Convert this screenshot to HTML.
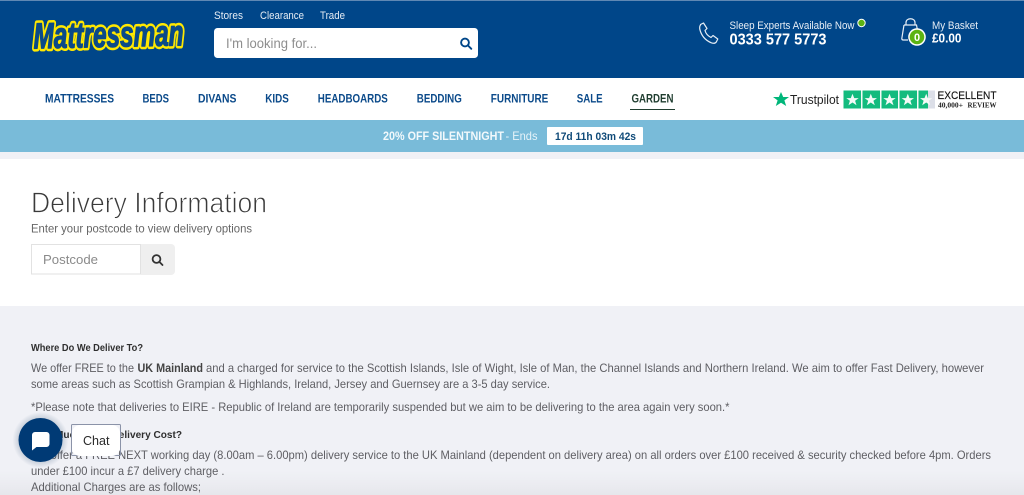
<!DOCTYPE html>
<html lang="en"><head><meta charset="utf-8"><title>Delivery Information</title>
<style>
html,body{margin:0;padding:0;width:1024px;height:495px;overflow:hidden;background:#f0f1f6}
svg{display:block;position:absolute;left:0;top:0;font-family:"Liberation Sans",Arial,sans-serif}
</style></head><body>
<svg width="1024" height="495" viewBox="0 0 1024 495" xmlns="http://www.w3.org/2000/svg">
<defs>
<linearGradient id="fade" x1="0" y1="0" x2="0" y2="1"><stop offset="0" stop-color="#e4e5ea" stop-opacity="0"/><stop offset="1" stop-color="#dfe0e5"/></linearGradient>
<radialGradient id="sh"><stop offset=".7" stop-color="#002a55" stop-opacity=".22"/><stop offset="1" stop-color="#002a55" stop-opacity="0"/></radialGradient>
<polygon id="s" points="0,-6.2 1.7,-1.9 6.2,-1.9 2.6,0.8 4,5.2 0,2.500 -4,5.2 -2.6,0.8 -6.2,-1.9 -1.7,-1.9"/>
</defs>
<rect width="1024" height="495" fill="#f0f1f6"/>
<rect y="470" width="1024" height="25" fill="url(#fade)" opacity=".6"/>
<rect width="1024" height="78" fill="#004689"/><rect width="1024" height="1" fill="#5f88b4"/>
<rect y="78" width="1024" height="42" fill="#fff"/>
<rect y="120" width="1024" height="32" fill="#79bbd9"/>
<rect y="159" width="1024" height="147" fill="#fff"/>

<g transform="rotate(-1.2 108 33)" font-size="36" font-weight="700" font-style="italic" stroke-linejoin="round">
<text x="33.500" y="46.800" textLength="150" lengthAdjust="spacingAndGlyphs" fill="#ffe800" stroke="#ffe800" stroke-width="6.400">Mattressman</text>
<text x="33.500" y="46.800" textLength="150" lengthAdjust="spacingAndGlyphs" fill="#0a4a88" stroke="#0a4a88" stroke-width="1.400">Mattressman</text></g>

<g fill="#e6edf5" font-size="10.800">
<text x="214" y="19" textLength="29" lengthAdjust="spacingAndGlyphs">Stores</text>
<text x="260" y="19" textLength="44" lengthAdjust="spacingAndGlyphs">Clearance</text>
<text x="320" y="19" textLength="25" lengthAdjust="spacingAndGlyphs">Trade</text></g>
<rect x="214" y="28" width="264" height="30" rx="3.500" fill="#fff"/>
<text x="226" y="48" font-size="14" fill="#8e8e8e" textLength="91" lengthAdjust="spacingAndGlyphs">I'm looking for...</text>
<g fill="none" stroke="#004689" stroke-width="1.900"><circle cx="465" cy="42.500" r="3.900"/><path d="M468 45.500l3.300 3.300" stroke-linecap="round"/></g>

<path d="M700.500 24.500l3-1.500 3.500 5.500-2 2c.8 3 3 5.500 6 7l2-2 4.800 3.500-1.500 3c-1 1.500-3 1.500-5 .8-6-2.500-10-7.500-11.500-13.500-.3-2 0-3.500.7-4.300z" fill="none" stroke="#e6eef6" stroke-width="1.200" stroke-linejoin="round"/>
<text x="729.500" y="29" font-size="10.800" fill="#e6edf5" textLength="125" lengthAdjust="spacingAndGlyphs">Sleep Experts Available Now</text>
<circle cx="861.500" cy="23" r="4.200" fill="#fff"/><circle cx="861.500" cy="23" r="3.200" fill="#5cb312"/>
<text x="729.500" y="44.500" font-size="15.500" font-weight="700" fill="#fff" textLength="97" lengthAdjust="spacingAndGlyphs">0333 577 5773</text>
<path d="M904 25h12.500l1.500 8M904 25l-2.200 13.500c0 1 .5 1.500 1.500 1.500h4.700M906 25v-2.500c0-5 9-5 9 0v2.500" fill="none" stroke="#e6eef6" stroke-width="1.200"/>
<circle cx="917" cy="37" r="8.800" fill="#fff"/><circle cx="917" cy="37" r="7.300" fill="#5cb312"/>
<text x="917" y="41" font-size="11" font-weight="700" fill="#fff" text-anchor="middle">0</text>
<text x="932" y="29" font-size="10.800" fill="#e6edf5" textLength="46" lengthAdjust="spacingAndGlyphs">My Basket</text>
<text x="932" y="42.500" font-size="13" font-weight="700" fill="#fff" textLength="29.500" lengthAdjust="spacingAndGlyphs">£0.00</text>

<g font-size="11.600" font-weight="700" fill="#0b4a8a">
<text x="45" y="102.300" textLength="69" lengthAdjust="spacingAndGlyphs">MATTRESSES</text>
<text x="142.500" y="102.300" textLength="26.500" lengthAdjust="spacingAndGlyphs">BEDS</text>
<text x="198" y="102.300" textLength="38.500" lengthAdjust="spacingAndGlyphs">DIVANS</text>
<text x="265.300" y="102.300" textLength="23.500" lengthAdjust="spacingAndGlyphs">KIDS</text>
<text x="317.800" y="102.300" textLength="70" lengthAdjust="spacingAndGlyphs">HEADBOARDS</text>
<text x="416.800" y="102.300" textLength="45" lengthAdjust="spacingAndGlyphs">BEDDING</text>
<text x="490.800" y="102.300" textLength="57.500" lengthAdjust="spacingAndGlyphs">FURNITURE</text>
<text x="576.700" y="102.300" textLength="26" lengthAdjust="spacingAndGlyphs">SALE</text>
<text x="631.500" y="102.300" textLength="42" lengthAdjust="spacingAndGlyphs" fill="#1f3d2f">GARDEN</text></g>
<rect x="630" y="109" width="45" height="1" fill="#1f3d2f"/>

<polygon points="781,92 783.200,97 789,97 784.400,100.400 786.200,106 781,102.700 775.800,106 777.600,100.400 773,97 778.800,97" fill="#00b67a"/>
<text x="790" y="104" font-size="12.500" fill="#222" textLength="49" lengthAdjust="spacingAndGlyphs">Trustpilot</text>
<rect x="843.500" y="90.500" width="91.500" height="18" fill="#13bb7e"/>
<rect x="928" y="90.500" width="7" height="18" fill="#dcdfe8"/>
<g fill="#f4faf7"><rect x="861" y="90.500" width="1.500" height="18"/><rect x="880" y="90.500" width="1.500" height="18"/><rect x="898" y="90.500" width="1.500" height="18"/><rect x="917" y="90.500" width="1.500" height="18"/>
<use href="#s" x="852.500" y="100"/><use href="#s" x="870.800" y="100"/><use href="#s" x="889.500" y="100"/><use href="#s" x="907.800" y="100"/><use href="#s" x="926.200" y="100"/></g>
<text x="937.500" y="99" font-size="11" fill="#111" stroke="#111" stroke-width=".15" textLength="59" lengthAdjust="spacingAndGlyphs">EXCELLENT</text>
<g font-family="'Liberation Serif',serif" font-size="7" font-weight="700" fill="#222"><text x="938" y="107.500" textLength="25" lengthAdjust="spacingAndGlyphs">40,000+</text><text x="967.500" y="107.500" textLength="29" lengthAdjust="spacingAndGlyphs">REVIEW</text></g>

<text x="383" y="140" font-size="12" font-weight="700" fill="#f2f9fc" textLength="121" lengthAdjust="spacingAndGlyphs">20% OFF SILENTNIGHT</text>
<text x="505.500" y="140" font-size="12" fill="#e6f3f9" textLength="32" lengthAdjust="spacingAndGlyphs">- Ends</text>
<rect x="547" y="127" width="96" height="18" rx="1" fill="#fff"/>
<text x="555" y="140" font-size="11.200" font-weight="700" fill="#0f4a78" textLength="81" lengthAdjust="spacingAndGlyphs">17d 11h 03m 42s</text>

<text x="31" y="212.500" font-size="29" fill="#3a3a3a" stroke="#fff" stroke-width=".85" paint-order="fill" textLength="236" lengthAdjust="spacingAndGlyphs">Delivery Information</text>
<text x="31" y="232.500" font-size="12" fill="#666" textLength="221" lengthAdjust="spacingAndGlyphs">Enter your postcode to view delivery options</text>
<rect x="31.500" y="244.500" width="109" height="29.500" fill="#fff" stroke="#e2e2e2"/>
<path d="M141 244h30a4 4 0 0 1 4 4v23a4 4 0 0 1-4 4h-30z" fill="#efefef"/>
<text x="43" y="264" font-size="13" fill="#8a8a8a" textLength="55" lengthAdjust="spacingAndGlyphs">Postcode</text>
<g fill="none" stroke="#333" stroke-width="1.800"><circle cx="156.500" cy="259" r="3.900"/><path d="M159.500 262l3 3" stroke-linecap="round"/></g>

<g font-size="12" fill="#5e5e63">
<text x="31" y="351" font-size="10.500" font-weight="700" fill="#2f2f2f" textLength="112" lengthAdjust="spacingAndGlyphs">Where Do We Deliver To?</text>
<text x="31" y="372" textLength="103" lengthAdjust="spacingAndGlyphs">We offer FREE to the</text>
<text x="137.500" y="372" font-weight="700" fill="#444" textLength="65.500" lengthAdjust="spacingAndGlyphs">UK Mainland</text>
<text x="206" y="372" textLength="778" lengthAdjust="spacingAndGlyphs">and a charged for service to the Scottish Islands, Isle of Wight, Isle of Man, the Channel Islands and Northern Ireland. We aim to offer Fast Delivery, however</text>
<text x="31" y="388" textLength="519" lengthAdjust="spacingAndGlyphs">some areas such as Scottish Grampian &amp; Highlands, Ireland, Jersey and Guernsey are a 3-5 day service.</text>
<text x="31" y="411" textLength="698.500" lengthAdjust="spacingAndGlyphs">*Please note that deliveries to EIRE - Republic of Ireland are temporarily suspended but we aim to be delivering to the area again very soon.*</text>
<text x="31" y="438" font-size="10.500" font-weight="700" fill="#2f2f2f" textLength="151" lengthAdjust="spacingAndGlyphs">How Much Does Delivery Cost?</text>
<text x="31" y="459" textLength="960" lengthAdjust="spacingAndGlyphs">We offer a FREE NEXT working day (8.00am – 6.00pm) delivery service to the UK Mainland (dependent on delivery area) on all orders over £100 received &amp; security checked before 4pm. Orders</text>
<text x="31" y="475" textLength="193.500" lengthAdjust="spacingAndGlyphs">under £100 incur a £7 delivery charge .</text>
<text x="31" y="491" textLength="170" lengthAdjust="spacingAndGlyphs">Additional Charges are as follows;</text></g>

<circle cx="40.500" cy="440" r="28" fill="url(#sh)"/>
<circle cx="40.500" cy="440" r="22" fill="#003a75"/>
<path d="M35 432h11.500a3 3 0 0 1 3 3v9a3 3 0 0 1-3 3h-10l-4.500 3.500v-15.500a3 3 0 0 1 3-3z" fill="#fff"/>
<rect x="71.500" y="424.500" width="49" height="31" rx="1" fill="none" stroke="#8b93a8"/>
<rect x="72" y="425" width="48" height="31" rx="8" fill="#fff"/>
<text x="83" y="445" font-size="12.500" fill="#2a2a2a" textLength="26.500" lengthAdjust="spacingAndGlyphs">Chat</text>
</svg>
</body></html>
